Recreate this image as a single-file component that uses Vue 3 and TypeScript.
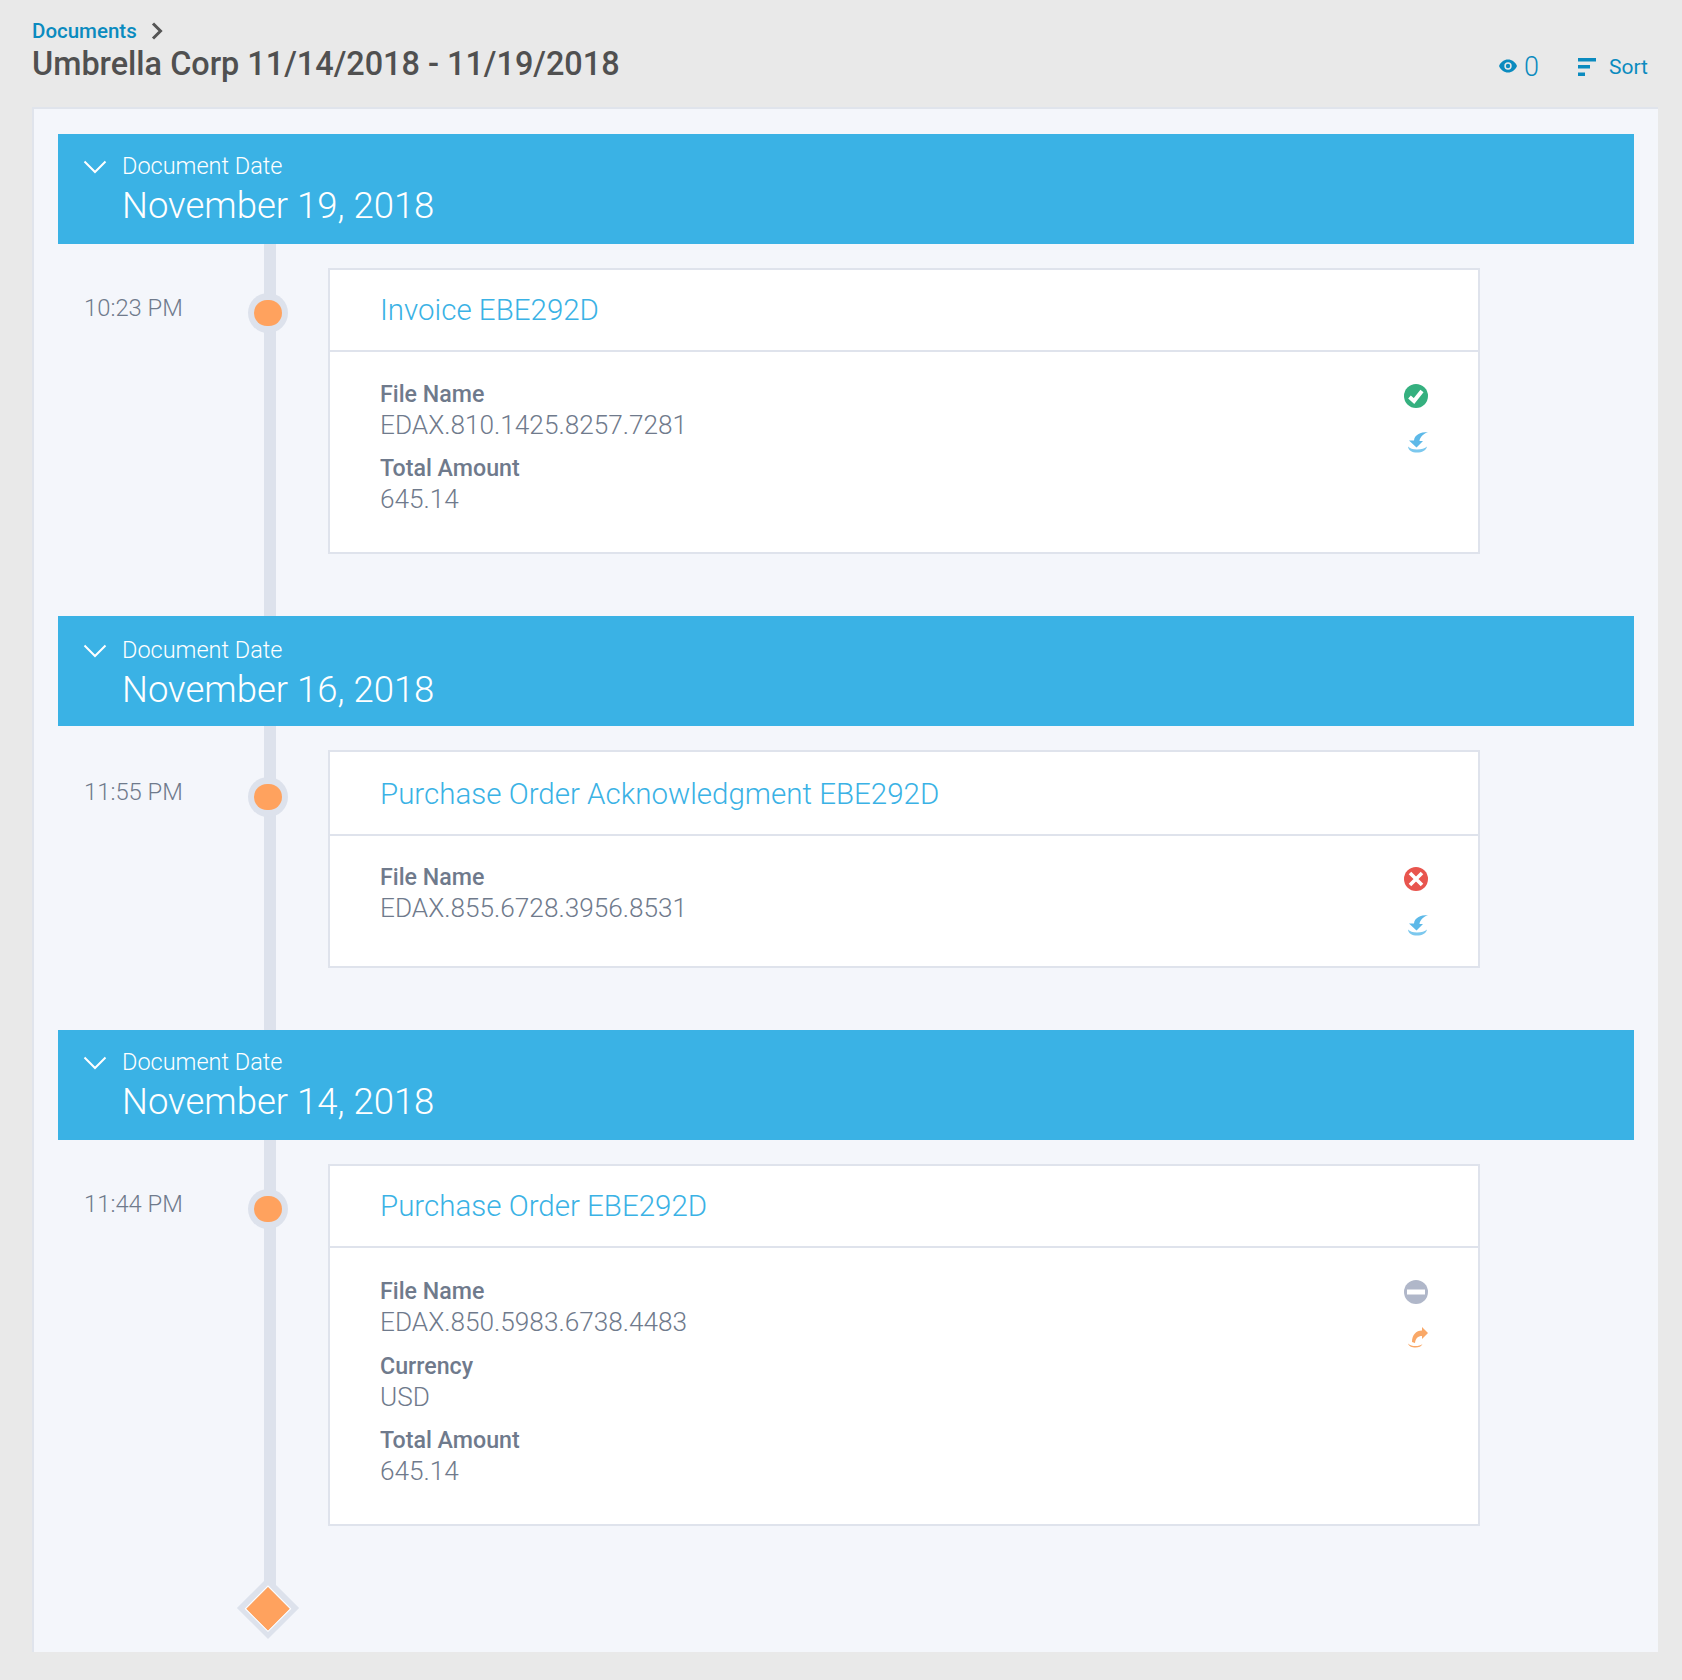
<script setup lang="ts">
interface Field { label: string; value: string }
interface Entry {
  date: string
  time: string
  title: string
  status: 'ok' | 'error' | 'none'
  direction: 'in' | 'out'
  fields: Field[]
}
const entries: Entry[] = [
  { date: 'November 19, 2018', time: '10:23 PM', title: 'Invoice EBE292D', status: 'ok', direction: 'in',
    fields: [{ label: 'File Name', value: 'EDAX.810.1425.8257.7281' }, { label: 'Total Amount', value: '645.14' }] },
  { date: 'November 16, 2018', time: '11:55 PM', title: 'Purchase Order Acknowledgment EBE292D', status: 'error', direction: 'in',
    fields: [{ label: 'File Name', value: 'EDAX.855.6728.3956.8531' }] },
  { date: 'November 14, 2018', time: '11:44 PM', title: 'Purchase Order EBE292D', status: 'none', direction: 'out',
    fields: [{ label: 'File Name', value: 'EDAX.850.5983.6738.4483' }, { label: 'Currency', value: 'USD' }, { label: 'Total Amount', value: '645.14' }] },
]
</script>

<template>
  <div class="page">
    <header class="top">
      <div>
        <div class="crumb">
          <span>Documents</span>
          <svg width="12" height="18" viewBox="0 0 12 18"><path d="M2 1.500 9.500 9 2 16.500" fill="none" stroke="#555" stroke-width="3" /></svg>
        </div>
        <h1>Umbrella Corp 11/14/2018 - 11/19/2018</h1>
      </div>
      <div class="tools">
        <span class="views">
          <svg class="eye" width="18" height="14" viewBox="0 0 18 14"><path d="M9 .5C5 .5 1.800 3 0 7c1.800 4 5 6.500 9 6.500S16.200 11 18 7C16.200 3 13 .5 9 .5Z" fill="#0b8bbf" /><circle cx="9" cy="7" r="3.700" fill="#e9e9e9" /><circle cx="9" cy="7" r="2.200" fill="#0b8bbf" /></svg>
          <span class="count">0</span>
        </span>
        <span class="sort">
          <svg width="18" height="18" viewBox="0 0 18 18" fill="#0b8bbf"><rect width="18" height="3.500" /><rect y="7" width="12" height="3.500" /><rect y="14.500" width="7" height="3.500" /></svg>
          <span>Sort</span>
        </span>
      </div>
    </header>

    <main class="panel">
      <section v-for="(e, i) in entries" :key="e.date" :class="{ compact: e.fields.length === 1 }">
        <div class="band">
          <svg class="chev" width="24" height="14" viewBox="0 0 24 14"><path d="M1.500 1.500 12 12 22.500 1.500" fill="none" stroke="#fff" stroke-width="2" /></svg>
          <div>
            <div class="band-label">Document Date</div>
            <div class="band-date">{{ e.date }}</div>
          </div>
        </div>
        <div class="body" :class="{ last: i === entries.length - 1 }">
          <div class="rail"></div>
          <div class="time">{{ e.time }}</div>
          <div class="node"><span></span></div>
          <article class="card">
            <div class="card-title">{{ e.title }}</div>
            <div class="card-body">
              <div class="fields">
                <div v-for="f in e.fields" :key="f.label" class="field">
                  <div class="label">{{ f.label }}</div>
                  <div class="value">{{ f.value }}</div>
                </div>
              </div>
              <div class="icons">
                <svg width="24" height="24" viewBox="0 0 24 24">
                  <template v-if="e.status === 'ok'">
                    <circle cx="12" cy="12" r="12" fill="#35b07f" />
                    <path d="M5.500 13 10 17 18 7" fill="none" stroke="#fff" stroke-width="4" />
                  </template>
                  <template v-else-if="e.status === 'error'">
                    <circle cx="12" cy="12" r="12" fill="#e8554e" />
                    <path d="M6 6l12 12m0-12L6 18" fill="none" stroke="#fff" stroke-width="3.600" />
                  </template>
                  <template v-else>
                    <circle cx="12" cy="12" r="12" fill="#b0b7c9" />
                    <rect x="3" y="9.500" width="18" height="5" fill="#fff" />
                  </template>
                </svg>
                <svg v-if="e.direction === 'in'" width="24" height="24" viewBox="0 0 24 24">
                  <path d="M24 2C16 2 10.500 5 10 10.500H5L12.500 17.500 19 11h-3.500C16 7 19 4 24 2Z" fill="#5db9e8" />
                  <path d="M4 16.500C4.500 20.500 8 22.500 13 22.500S22 20.500 23 16.500C21 18.500 17.500 19.500 13 19.500S6 18.500 4 16.500Z" fill="#7cc8ee" />
                </svg>
                <svg v-else width="24" height="24" viewBox="0 0 24 24">
                  <path d="M24 7 18 1v3.500C12 4.500 8 9 8 16l3 1C11.500 12.500 14 10 18 10v3Z" fill="#f9a868" />
                  <path d="M4 17.500C5 20.500 8 21.500 11.500 21.500s6-1 7-3.500c-2 1.500-4 2-7 2S6 19.500 4 17.500Z" fill="#f9a868" />
                </svg>
              </div>
            </div>
          </article>
          <div v-if="i === entries.length - 1" class="diamond"><span></span></div>
        </div>
      </section>
    </main>
  </div>
</template>

<style>
html, body { margin: 0; background: #e9e9e9; }
</style>

<style scoped>
.page {
  width: 1682px;
  height: 1680px;
  box-sizing: border-box;
  padding: 20px 24px 28px 32px;
  background: #e9e9e9;
  font-family: Roboto, "Liberation Sans", sans-serif;
  color: #6f7a8c;
  display: flex;
  flex-direction: column;
}
.top {
  height: 87px;
  flex: none;
  display: flex;
  justify-content: space-between;
  align-items: flex-start;
}
.crumb {
  display: flex;
  align-items: center;
  gap: 14px;
  height: 22px;
  font-size: 20.500px;
  font-weight: 500;
  color: #0b8bbf;
}
h1 {
  margin: 2px 0 0;
  font-size: 32.400px;
  line-height: 41px;
  font-weight: 500;
  color: #505050;
}
.tools {
  display: flex;
  align-items: center;
  gap: 39px;
  margin-top: 33px;
  padding-right: 10px;
  color: #0b8bbf;
}
.views { display: flex; align-items: center; gap: 7px; }
.eye { margin-bottom: 3px; }
.count { font-size: 27px; line-height: 28px; font-weight: 300; }
.sort { display: flex; align-items: center; gap: 13px; font-size: 21px; line-height: 28px; }
.panel {
  flex: 1;
  box-sizing: border-box;
  background: #f4f6fb;
  border: 2px solid #e0e4ec;
  border-width: 2px 0 0 2px;
  padding: 25px 24px 0 24px;
}
.band {
  height: 110px;
  box-sizing: border-box;
  background: #3ab2e5;
  color: #fff;
  display: flex;
  align-items: flex-start;
  gap: 15px;
  padding: 18px 0 0 25px;
}
.compact .band { padding-top: 20px; }
.chev { margin-top: 8px; }
.band-label { font-size: 23.500px; line-height: 28px; font-weight: 300; }
.band-date { font-size: 36.500px; line-height: 52px; font-weight: 300; }
.body {
  position: relative;
  display: grid;
  grid-template-columns: 270px 1152px;
  padding: 24px 0 62px;
}
.body.last { padding-bottom: 0; height: 512px; box-sizing: border-box; align-content: start; }
.rail {
  position: absolute;
  left: 206px;
  top: 0;
  bottom: 0;
  width: 12px;
  background: #dde2ec;
}
.body.last .rail { bottom: 44px; }
.time {
  padding: 25px 0 0 26px;
  font-size: 23.800px;
  line-height: 30px;
  font-weight: 300;
}
.compact .time { padding-top: 27px; }
.node {
  position: absolute;
  left: 190px;
  top: 49px;
  width: 40px;
  height: 40px;
  box-sizing: border-box;
  border-radius: 50%;
  background: #dde2ec;
  display: flex;
  align-items: center;
  justify-content: center;
}
.compact .node { top: 51px; }
.node span {
  display: block;
  width: 28px;
  height: 26px;
  border-radius: 13px;
  background: #ffa25e;
}
.card {
  position: relative;
  background: #fff;
  border: 2px solid #dfe3ec;
}
.card-title {
  height: 82px;
  box-sizing: border-box;
  padding: 0 0 0 50px;
  border-bottom: 2px solid #dfe3ec;
  font-size: 29.500px;
  line-height: 80px;
  font-weight: 300;
  color: #3ab2e5;
}
.compact .card-title { height: 84px; line-height: 84px; }
.card-body {
  display: flex;
  justify-content: space-between;
  padding: 27px 50px 25px 50px;
}
.compact .card-body { padding-top: 26px; padding-bottom: 25px; }
.last .card-body { padding-top: 28px; padding-bottom: 24px; }
.field { margin-bottom: 11px; }
.last .field { margin-bottom: 11.500px; }
.label { font-size: 23.200px; line-height: 30px; font-weight: 500; color: #6f7a8c; }
.value { font-size: 26.200px; line-height: 33px; font-weight: 300; color: #6f7a8c; }
.icons { display: flex; flex-direction: column; gap: 22px; padding: 5px 0 0; }
.last .icons { padding-top: 4px; }
.compact .icons { padding: 5px 0 4px; }
.diamond {
  position: absolute;
  left: 188px;
  bottom: 22px;
  width: 44px;
  height: 44px;
  box-sizing: border-box;
  transform: rotate(45deg);
  background: #dde2ec;
  display: flex;
  align-items: center;
  justify-content: center;
}
.diamond span { display: block; width: 31px; height: 31px; background: #ffa25e; outline: 1px solid #fff; }
</style>
